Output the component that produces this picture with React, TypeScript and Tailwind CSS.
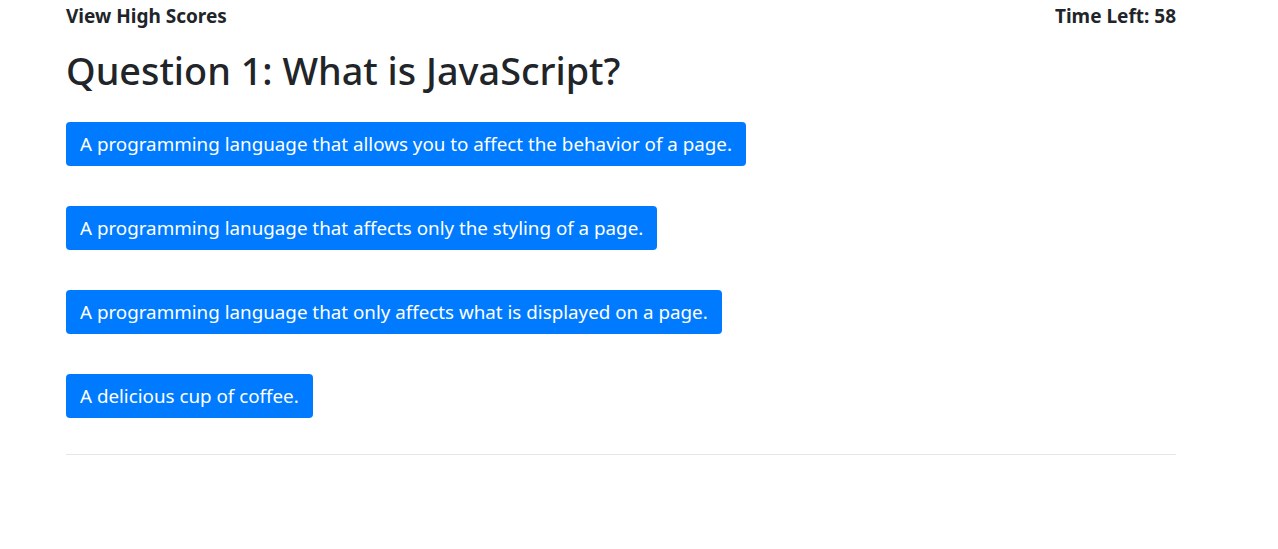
const answers = [
  'A programming language that allows you to affect the behavior of a page.',
  'A programming lanugage that affects only the styling of a page.',
  'A programming language that only affects what is displayed on a page.',
  'A delicious cup of coffee.',
];

export default function App() {
  return (
    <div className="min-h-[549px] bg-white text-[#212529] font-['Noto_Sans',sans-serif]">
      <div className="ml-[66px] w-[1110px]">
        {/* top bar */}
        <div className="flex items-center justify-between h-[32px] text-[19px] font-bold">
          <span>View High Scores</span>
          <span>Time Left: 58</span>
        </div>

        <h1 className="mt-[17px] text-[37.8px] font-medium leading-[44px]">
          Question 1: What is JavaScript?
        </h1>

        <div className="mt-[29px] flex flex-col items-start gap-[40px]">
          {answers.map((a) => (
            <button
              key={a}
              className="h-[44px] px-[14px] pt-[1px] rounded-[4px] bg-[#007bff] text-white text-[18.8px] leading-[43px]"
            >
              {a}
            </button>
          ))}
        </div>

        <hr className="mt-[36px] border-t border-[#e6e6e6]" />
      </div>
    </div>
  );
}
